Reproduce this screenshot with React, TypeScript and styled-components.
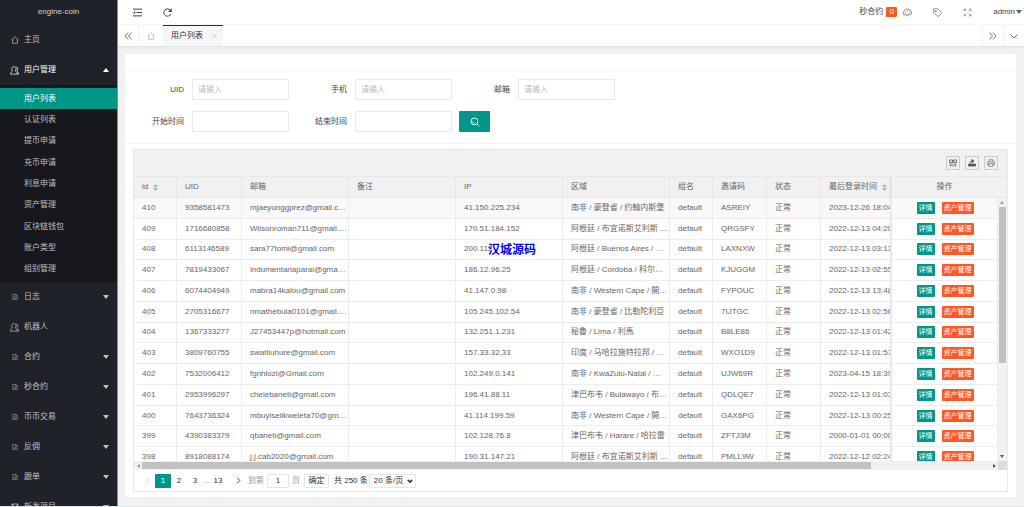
import React, { useState } from "react";
import styled, { createGlobalStyle, css } from "styled-components";

const teal = "#009688";
const orange = "#ff5722";

const GlobalStyle = createGlobalStyle`
  * { box-sizing: border-box; }
  html, body, #root { height: 100%; }
  body {
    margin: 0;
    overflow: hidden;
    background: #f1f1f1;
    color: #555;
    font: 8px/12px "Liberation Sans", "Noto Sans CJK SC", sans-serif;
  }
  button, input, select { font: inherit; color: inherit; margin: 0; }
  button { cursor: pointer; padding: 0; border: 0; background: none; }
  a { color: inherit; text-decoration: none; }
  svg { display: block; flex: none; }
`;

const Shell = styled.div`
  display: flex;
  height: 100vh;
  overflow: hidden;
  border-bottom: 1px solid #dde5ec;
`;

/* ---------- icons ---------- */

const Icon = ({ size = 9, width = 1, children }: { size?: number; width?: number; children: React.ReactNode }) => (
  <svg
    width={size}
    height={size}
    viewBox="0 0 16 16"
    fill="none"
    stroke="currentColor"
    strokeWidth={width * (16 / size)}
    aria-hidden="true"
  >
    {children}
  </svg>
);

const HomeIcon = ({ size = 9 }: { size?: number }) => (
  <Icon size={size} width={0.7}>
    <path d="M1 8 8 1.5 15 8M3.2 6.5V14.5H12.8V6.5" />
  </Icon>
);
const UserIcon = () => (
  <Icon size={9} width={0.7}>
    <path d="M4.500 8.500C3.500 7.500 3.200 6.500 3.200 5 3.200 2.500 4.800 1 7 1S10.800 2.500 10.800 5C10.800 6.500 10.500 7.500 9.500 8.500 9.500 10 13 10 13 14.500H1C1 10 4.500 10 4.500 8.500Z" />
    <path d="M11 1.500C13 2 13.800 3.500 13.800 5.500 13.800 7 13.200 8 12.500 8.500 12.800 10 15.300 10.500 15.300 14.500H13" />
  </Icon>
);
const FileIcon = () => (
  <Icon size={6} width={0.7}>
    <path d="M2 1h8l4 4v10H2ZM10 1v4h4M5 8h6M5 11.500h6" />
  </Icon>
);
const NewIcon = () => (
  <Icon size={8} width={0.8}>
    <path d="M2 2h12v12H2ZM2 2l12 12M14 2 8 8M5 8v6" />
  </Icon>
);
const Caret = ({ up = false }: { up?: boolean }) => (
  <svg width="6" height="4" viewBox="0 0 6 4" fill="currentColor" aria-hidden="true">
    <path d={up ? "M0 4 3 0 6 4Z" : "M0 0H6L3 4Z"} />
  </svg>
);
const SortMarks = () => (
  <svg width="5" height="7" viewBox="0 0 5 7" fill="#b2b2b2" aria-hidden="true">
    <path d="M0 3 2.500 0 5 3ZM0 4H5L2.500 7Z" />
  </svg>
);

/* ---------- side menu ---------- */

const Side = styled.nav`
  flex: none;
  width: 118px;
  background: #20222a;
  color: rgba(255, 255, 255, 0.72);
  border-right: 1px solid #8d8e92;
  overflow: hidden;
`;
const Brand = styled.div`
  height: 25px;
  line-height: 24px;
  text-align: center;
  color: rgba(255, 255, 255, 0.8);
`;
const MenuLink = styled.a<{ $open?: boolean }>`
  display: flex;
  align-items: center;
  height: 30px;
  padding: 0 8px 0 10px;
  color: ${(p) => (p.$open ? "#fff" : "inherit")};
  span { flex: 1; }
`;
const MenuIcon = styled.i<{ $dim?: boolean }>`
  display: flex;
  justify-content: center;
  width: 9px;
  margin-right: 5px;
  opacity: ${(p) => (p.$dim ? 0.7 : 1)};
`;
const SubMenu = styled.div`
  display: flex;
  flex-direction: column;
  height: 197px;
  padding: 3px 0 2px;
  background: #17181e;
`;
const SubLink = styled.a<{ $active?: boolean }>`
  flex: 1;
  display: flex;
  align-items: center;
  padding-left: 24px;
  ${(p) => p.$active && css`background: ${teal}; color: #fff;`}
`;

const subItems = ["用户列表", "认证列表", "提币申请", "充币申请", "利息申请", "资产管理", "区块链钱包", "账户类型", "组别管理"];
const lowerItems: { text: string; icon: "file" | "user" | "new"; leaf?: boolean }[] = [
  { text: "日志", icon: "file" },
  { text: "机器人", icon: "user", leaf: true },
  { text: "合约", icon: "file" },
  { text: "秒合约", icon: "file" },
  { text: "币币交易", icon: "file" },
  { text: "反佣", icon: "file" },
  { text: "跟单", icon: "file" },
  { text: "新发项目", icon: "new" },
];

const SideMenu = () => (
  <Side>
    <Brand>engine-coin</Brand>
    <MenuLink href="#home"><MenuIcon><HomeIcon size={8} /></MenuIcon><span>主页</span></MenuLink>
    <MenuLink href="#users" $open><MenuIcon><UserIcon /></MenuIcon><span>用户管理</span><Caret up /></MenuLink>
    <SubMenu>
      {subItems.map((t, i) => <SubLink href="#sub" key={t} $active={i === 0}>{t}</SubLink>)}
    </SubMenu>
    {lowerItems.map((m) => (
      <MenuLink href="#menu" key={m.text}>
        <MenuIcon $dim={m.icon === "file"}>
          {m.icon === "file" ? <FileIcon /> : m.icon === "user" ? <UserIcon /> : <NewIcon />}
        </MenuIcon>
        <span>{m.text}</span>
        {!m.leaf && <Caret />}
      </MenuLink>
    ))}
  </Side>
);

/* ---------- top bars ---------- */

const Main = styled.div`
  flex: 1;
  min-width: 0;
`;
const TopBar = styled.header`
  display: flex;
  align-items: center;
  height: 25px;
  padding: 0 2px 0 15px;
  background: #fff;
  border-bottom: 1px solid #f6f6f6;
  color: #444;
`;
const TopLeft = styled.div`
  flex: 1;
  display: flex;
  gap: 21px;
`;
const TopRight = styled.div`
  display: flex;
  align-items: center;
  gap: 21px;
  > button > svg { color: #666; }
`;
const Notice = styled.a`
  display: flex;
  align-items: center;
  gap: 3px;
  margin-right: -15px;
`;
const Badge = styled.span`
  width: 11px;
  line-height: 10px;
  border-radius: 1px;
  background: ${orange};
  color: #fff;
  text-align: center;
`;
const UserButton = styled.button`
  display: flex;
  align-items: center;
  gap: 1px;
`;
const TabBar = styled.div`
  display: flex;
  height: 21px;
  background: #fff;
  box-shadow: 0 1px 1px rgba(0, 0, 0, 0.06);
  color: #666;
`;
const TabControl = styled.button<{ $side: "left" | "right" }>`
  display: flex;
  align-items: center;
  justify-content: center;
  width: 21px;
  border-${(p) => (p.$side === "left" ? "right" : "left")}: 1px solid #f3f3f3;
`;
const HomeTab = styled.a`
  display: flex;
  align-items: center;
  justify-content: center;
  width: 24px;
  color: #aaa;
`;
const ActiveTab = styled.div`
  display: flex;
  align-items: center;
  gap: 9px;
  width: 60px;
  padding-left: 8px;
  border-top: 1px solid #292b34;
  background: #f6f6f6;
  color: #333;
  button { color: #bbb; }
`;
const Spacer = styled.div`
  flex: 1;
`;

const TopBars = () => (
  <>
    <TopBar>
      <TopLeft>
        <button aria-label="收起菜单">
          <Icon size={9}><path d="M0 2H16M6 8H16M0 14H16" /><path d="M4 5.500V10.500L0 8Z" fill="currentColor" stroke="none" /></Icon>
        </button>
        <button aria-label="刷新">
          <Icon size={9}><path d="M14 10.500A6.500 6.500 0 1 1 13 4" /><path d="M15.500 0V7H9Z" fill="currentColor" stroke="none" /></Icon>
        </button>
      </TopLeft>
      <TopRight>
        <Notice href="#notice">秒合约<Badge>0</Badge></Notice>
        <button aria-label="主题">
          <Icon size={9} width={0.8}><path d="M2 13C-.5 8 2 2 8 2s8.500 5 6.500 9c-1.500 1-2.500-1-4.500-.5-1.500.5 0 3-1.500 3.500C6 14.500 6.500 11 5 11c-1.500 0-2 1-3 2Z" /><path d="M4 7.500H6M7 5H9M11 7H13" /></Icon>
        </button>
        <button aria-label="便签">
          <Icon size={9} width={0.7}><path d="M1 1.500 8 1 15.500 9 9.500 15.500 1 8ZM4 4.500H6V6.500H4Z" /></Icon>
        </button>
        <button aria-label="全屏">
          <Icon size={9} width={0.6}><path d="M6 6 2 2M2 5.500V2H5.500M10 6 14 2M10.500 2H14V5.500M6 10 2 14M2 10.500V14H5.500M10 10 14 14M10.500 14H14V10.500" /></Icon>
        </button>
        <UserButton>admin <Caret /></UserButton>
      </TopRight>
    </TopBar>
    <TabBar>
      <TabControl $side="left" aria-label="向左">
        <Icon size={8} width={0.9}><path d="M8 1 2 8 8 15M15 1 9 8 15 15" /></Icon>
      </TabControl>
      <HomeTab href="#home" aria-label="主页"><HomeIcon size={8} /></HomeTab>
      <ActiveTab>
        用户列表
        <button aria-label="关闭"><Icon size={5} width={0.7}><path d="M2 2 14 14M14 2 2 14" /></Icon></button>
      </ActiveTab>
      <Spacer />
      <TabControl $side="right" aria-label="向右">
        <Icon size={8} width={0.9}><path d="M1 1 7 8 1 15M8 1 14 8 8 15" /></Icon>
      </TabControl>
      <TabControl $side="right" aria-label="更多">
        <Icon size={8} width={0.9}><path d="M1 5 8 12 15 5" /></Icon>
      </TabControl>
    </TabBar>
  </>
);

/* ---------- search form ---------- */

const Card = styled.section`
  margin: 8px 8px 0 7px;
  background: #fff;
  border-radius: 1px;
`;
const CardHeader = styled.div`
  height: 17px;
  border-bottom: 1px solid #f6f6f6;
`;
const SearchForm = styled.form`
  display: flex;
  flex-direction: column;
  gap: 11px;
  padding: 8px 8px 11px;
  border-bottom: 1px solid #f6f6f6;
`;
const FormRow = styled.div`
  display: flex;
  gap: 7px;
`;
const Field = styled.label`
  display: flex;
  align-items: center;
  color: #444;
  span {
    width: 59px;
    padding-right: 8px;
    text-align: right;
  }
`;
const TextInput = styled.input`
  width: 97px;
  height: 21px;
  padding: 0 5px;
  border: 1px solid #e9e9e9;
  border-radius: 1px;
  background: #fff;
  outline: none;
  &::placeholder { color: #bbb; opacity: 1; }
`;
const SearchButton = styled.button`
  display: flex;
  align-items: center;
  justify-content: center;
  width: 31px;
  height: 21px;
  border-radius: 1px;
  background: ${teal};
  color: #fff;
`;

/* ---------- data table ---------- */

const TableView = styled.div`
  border: 1px solid #e9e9e9;
`;
const CardBody = styled.div`
  padding: 5px 8px 5px;
`;
const ToolBar = styled.div`
  display: flex;
  justify-content: flex-end;
  align-items: center;
  gap: 5px;
  height: 27px;
  padding-right: 9px;
  background: #f1f1f1;
  border-bottom: 1px solid #e9e9e9;
`;
const ToolButton = styled.button`
  display: flex;
  align-items: center;
  justify-content: center;
  width: 14px;
  height: 14px;
  border: 1px solid #ccc;
  color: #555;
`;
const Viewport = styled.div`
  display: flex;
  height: 284px;
  overflow: hidden;
`;
const ScrollPane = styled.div`
  flex: 1;
  min-width: 0;
  overflow: hidden;
`;
const FixedPane = styled.div`
  flex: none;
  width: 107px;
  border-left: 1px solid #e6e6e6;
  box-shadow: -1px 0 3px rgba(0, 0, 0, 0.08);
`;
const Table = styled.table`
  width: 100%;
  height: 291px;
  table-layout: fixed;
  border-collapse: separate;
  border-spacing: 0;
  color: #666;
`;
const Th = styled.th<{ $center?: boolean }>`
  height: 21px;
  padding: 0 0 0 8px;
  background: #f1f1f1;
  border-right: 1px solid #e6e6e6;
  border-bottom: 1px solid #e6e6e6;
  font-weight: 400;
  text-align: left;
  white-space: nowrap;
  ${(p) => p.$center && css`padding: 0; text-align: center; border-right-color: transparent;`}
`;
const Sortable = styled.span`
  display: flex;
  align-items: center;
  gap: 5px;
`;
const Tr = styled.tr<{ $hover?: boolean }>`
  background: ${(p) => (p.$hover ? "#f9f9f9" : "#fff")};
`;
const Td = styled.td`
  position: relative;
  padding: 0 0 0 8px;
  border-right: 1px solid #ececec;
  border-bottom: 1px solid #ececec;
  white-space: nowrap;
  overflow: hidden;
`;
const Watermark = styled.span`
  position: absolute;
  left: 32px;
  top: 3px;
  color: #00f;
  font-size: 12px;
  line-height: 14px;
  font-weight: 700;
`;
const Actions = styled.div`
  display: flex;
  justify-content: center;
  gap: 7px;
  padding-right: 7px;
`;
const ActionButton = styled.button<{ $color: string }>`
  height: 12px;
  padding: 0 2px;
  line-height: 12px;
  font-size: 7px;
  border-radius: 1px;
  background: ${(p) => p.$color};
  color: #fff;
  white-space: nowrap;
`;
const VBar = styled.div`
  flex: none;
  display: flex;
  flex-direction: column;
  width: 9px;
  background: #f1f1f1;
  color: #555;
`;
const VBarHead = styled.div`
  height: 21px;
  border-bottom: 1px solid #e6e6e6;
`;
const BarArrow = styled.span`
  display: flex;
  align-items: center;
  justify-content: center;
  flex: none;
  width: 8px;
  height: 9px;
`;
const VThumb = styled.div`
  height: 156px;
  margin: 0 1px;
  background: #c1c1c1;
`;
const HBar = styled.div`
  display: flex;
  align-items: center;
  height: 9px;
  background: #f1f1f1;
  color: #555;
`;
const HTrack = styled.div`
  flex: 1;
  height: 7px;
`;
const HThumb = styled.div`
  width: 86%;
  height: 7px;
  background: #c1c1c1;
`;
const Corner = styled.div`
  width: 9px;
  height: 9px;
  background: #dcdcdc;
`;

const columns: { title: string; width?: number; sort?: boolean }[] = [
  { title: "id", width: 43, sort: true },
  { title: "UID", width: 65 },
  { title: "邮箱", width: 107 },
  { title: "备注", width: 107 },
  { title: "IP", width: 107 },
  { title: "区域", width: 107 },
  { title: "组名", width: 43 },
  { title: "邀请码", width: 54 },
  { title: "状态", width: 54 },
  { title: "最后登录时间", sort: true },
];

const rows: string[][] = [
  ["410", "9358581473", "mjaeyunggprez@gmail.c…", "", "41.150.225.234", "南非 / 豪登省 / 约翰内斯堡", "default", "ASREIY", "正常", "2023-12-26 18:04:42"],
  ["409", "1716680858", "Wilsonroman711@gmail.…", "", "170.51.184.152", "阿根廷 / 布宜诺斯艾利斯 …", "default", "QRGSFY", "正常", "2022-12-13 04:20:31"],
  ["408", "6113146589", "sara77tomi@gmail.com", "", "200.112", "阿根廷 / Buenos Aires / …", "default", "LAXNXW", "正常", "2022-12-13 03:13:25"],
  ["407", "7819433067", "indumentariaparai@gma…", "", "186.12.96.25", "阿根廷 / Cordoba / 科尔…", "default", "KJUGGM", "正常", "2022-12-13 02:55:10"],
  ["406", "6074404949", "mabra14kalou@gmail.com", "", "41.147.0.98", "南非 / Western Cape / 開…", "default", "FYPOUC", "正常", "2022-12-13 13:48:05"],
  ["405", "2705316677", "nmathebula0101@gmail.…", "", "105.245.102.54", "南非 / 豪登省 / 比勒陀利亞", "default", "7IJTGC", "正常", "2022-12-13 02:56:08"],
  ["404", "1367333277", "J27453447p@hotmail.com", "", "132.251.1.231", "秘魯 / Lima / 利馬", "default", "B8LE86", "正常", "2022-12-13 01:42:21"],
  ["403", "3809760755", "swatiluhure@gmail.com", "", "157.33.32.33", "印度 / 马哈拉施特拉邦 / …", "default", "WXO1D9", "正常", "2022-12-13 01:57:44"],
  ["402", "7532006412", "fgnhlozi@Gmail.com", "", "102.249.0.141", "南非 / KwaZulu-Natal / …", "default", "UJW69R", "正常", "2023-04-15 18:39:17"],
  ["401", "2953996297", "chelebaneti@gmail.com", "", "196.41.88.11", "津巴布韦 / Bulawayo / 布…", "default", "QDLQE7", "正常", "2022-12-13 01:03:20"],
  ["400", "7643736324", "mbuyiselikweleta70@gm…", "", "41.114.199.59", "南非 / Western Cape / 開…", "default", "GAX6PG", "正常", "2022-12-13 00:25:41"],
  ["399", "4390383379", "qbaneti@gmail.com", "", "102.128.76.8", "津巴布韦 / Harare / 哈拉雷", "default", "ZFTJ3M", "正常", "2000-01-01 00:00:00"],
  ["398", "8918088174", "j.j.cab2020@gmail.com", "", "190.31.147.21", "阿根廷 / 布宜诺斯艾利斯 …", "default", "PMLL9W", "正常", "2022-12-12 02:24:33"],
];

/* ---------- pager ---------- */

const Pager = styled.div`
  display: flex;
  align-items: center;
  height: 21px;
  padding-left: 5px;
  color: #333;
`;
const PageLink = styled.a<{ $active?: boolean; $muted?: boolean; $wide?: boolean }>`
  display: flex;
  align-items: center;
  justify-content: center;
  width: ${(p) => (p.$wide ? 24 : 16)}px;
  height: 14px;
  ${(p) => p.$muted && css`color: #ccc;`}
  ${(p) => p.$active && css`background: ${teal}; color: #fff; border-radius: 1px;`}
`;
const Dots = styled.span`
  width: 7px;
  text-align: center;
  color: #888;
`;
const Jump = styled.label`
  display: flex;
  align-items: center;
  gap: 3px;
  margin: 0 4px 0 -2px;
  color: #999;
`;
const PageInput = styled.input`
  width: 22px;
  height: 14px;
  padding: 0;
  border: 1px solid #e6e6e6;
  border-radius: 1px;
  text-align: center;
  color: #333;
`;
const OkButton = styled.button`
  width: 25px;
  height: 14px;
  border: 1px solid #e6e6e6;
  border-radius: 1px;
`;
const Total = styled.span`
  margin: 0 1px 0 5px;
`;
const SelectWrap = styled.span`
  position: relative;
  svg {
    position: absolute;
    right: 3px;
    top: 4px;
    pointer-events: none;
  }
`;
const PageSelect = styled.select`
  display: block;
  appearance: none;
  width: 47px;
  height: 14px;
  padding: 0 4px;
  border: 1px solid #e6e6e6;
  border-radius: 1px;
  background: #fff;
`;

export default function App() {
  const [page, setPage] = useState("1");
  return (
    <Shell>
      <GlobalStyle />
      <SideMenu />
      <Main>
        <TopBars />
        <Card>
          <CardHeader />
          <SearchForm onSubmit={(e) => e.preventDefault()}>
            <FormRow>
              <Field><span>UID</span><TextInput placeholder="请输入" /></Field>
              <Field><span>手机</span><TextInput placeholder="请输入" /></Field>
              <Field><span>邮箱</span><TextInput placeholder="请输入" /></Field>
            </FormRow>
            <FormRow>
              <Field><span>开始时间</span><TextInput /></Field>
              <Field><span>结束时间</span><TextInput /></Field>
              <SearchButton aria-label="搜索">
                <Icon size={10} width={0.9}><circle cx="7" cy="7" r="5.500" /><path d="M11 11 15 15M4.500 7.500A2.500 2.500 0 0 0 7 10" /></Icon>
              </SearchButton>
            </FormRow>
          </SearchForm>
          <CardBody>
            <TableView>
              <ToolBar>
                <ToolButton aria-label="筛选列">
                  <Icon size={8} width={0.8}><path d="M1 2H7V7H1ZM9 2H15V7H9ZM2.500 9V15M6 9V15M10 9V15M13.500 9V15" /></Icon>
                </ToolButton>
                <ToolButton aria-label="导出">
                  <Icon size={8} width={0.8}><path d="M1 10H15V14H1Z" fill="currentColor" /><path d="M4 8C5 4 7 4 9 4M8 1 12 4 8 7Z" fill="currentColor" /></Icon>
                </ToolButton>
                <ToolButton aria-label="打印">
                  <Icon size={8} width={0.6}><path d="M4 5V1.500H12V5M4 12H1.500V5.500H14.500V12H12M4 9H12V14.500H4Z" /></Icon>
                </ToolButton>
              </ToolBar>
              <Viewport>
                <ScrollPane>
                  <Table>
                    <colgroup>
                      {columns.map((c) => <col key={c.title} width={c.width} />)}
                    </colgroup>
                    <thead>
                      <tr>
                        {columns.map((c) => (
                          <Th key={c.title}>{c.sort ? <Sortable>{c.title}<SortMarks /></Sortable> : c.title}</Th>
                        ))}
                      </tr>
                    </thead>
                    <tbody>
                      {rows.map((r, i) => (
                        <Tr key={r[0]} $hover={i === 0}>
                          {r.map((v, j) => (
                            <Td key={j}>{v}{r[0] === "408" && j === 4 && <Watermark>汉城源码</Watermark>}</Td>
                          ))}
                        </Tr>
                      ))}
                    </tbody>
                  </Table>
                </ScrollPane>
                <FixedPane>
                  <Table>
                    <thead><tr><Th $center>操作</Th></tr></thead>
                    <tbody>
                      {rows.map((r, i) => (
                        <Tr key={r[0]} $hover={i === 0}>
                          <Td>
                            <Actions>
                              <ActionButton $color={teal}>详情</ActionButton>
                              <ActionButton $color={orange}>资产管理</ActionButton>
                            </Actions>
                          </Td>
                        </Tr>
                      ))}
                    </tbody>
                  </Table>
                </FixedPane>
                <VBar>
                  <VBarHead />
                  <BarArrow><svg width="4" height="3" viewBox="0 0 4 3" fill="#999"><path d="M0 3 2 0 4 3Z" /></svg></BarArrow>
                  <VThumb />
                  <Spacer />
                  <BarArrow><svg width="4" height="3" viewBox="0 0 4 3" fill="currentColor"><path d="M0 0H4L2 3Z" /></svg></BarArrow>
                </VBar>
              </Viewport>
              <HBar>
                <BarArrow><svg width="3" height="4" viewBox="0 0 3 4" fill="#999"><path d="M3 0V4L0 2Z" /></svg></BarArrow>
                <HTrack><HThumb /></HTrack>
                <BarArrow><svg width="3" height="4" viewBox="0 0 3 4" fill="currentColor"><path d="M0 0V4L3 2Z" /></svg></BarArrow>
                <Corner />
              </HBar>
              <Pager>
                <PageLink href="#prev" $muted aria-label="上一页"><Icon size={7} width={0.9}><path d="M11 2 5 8 11 14" /></Icon></PageLink>
                <PageLink href="#1" $active>1</PageLink>
                <PageLink href="#2">2</PageLink>
                <PageLink href="#3">3</PageLink>
                <Dots>…</Dots>
                <PageLink href="#13">13</PageLink>
                <PageLink href="#next" $wide aria-label="下一页"><Icon size={7} width={0.9}><path d="M5 2 11 8 5 14" /></Icon></PageLink>
                <Jump>到第<PageInput value={page} onChange={(e) => setPage(e.target.value)} />页</Jump>
                <OkButton>确定</OkButton>
                <Total>共 250 条</Total>
                <SelectWrap>
                  <PageSelect aria-label="每页条数"><option>20 条/页</option></PageSelect>
                  <Icon size={6} width={1.5}><path d="M2 5 8 11 14 5" /></Icon>
                </SelectWrap>
              </Pager>
            </TableView>
          </CardBody>
        </Card>
      </Main>
    </Shell>
  );
}
